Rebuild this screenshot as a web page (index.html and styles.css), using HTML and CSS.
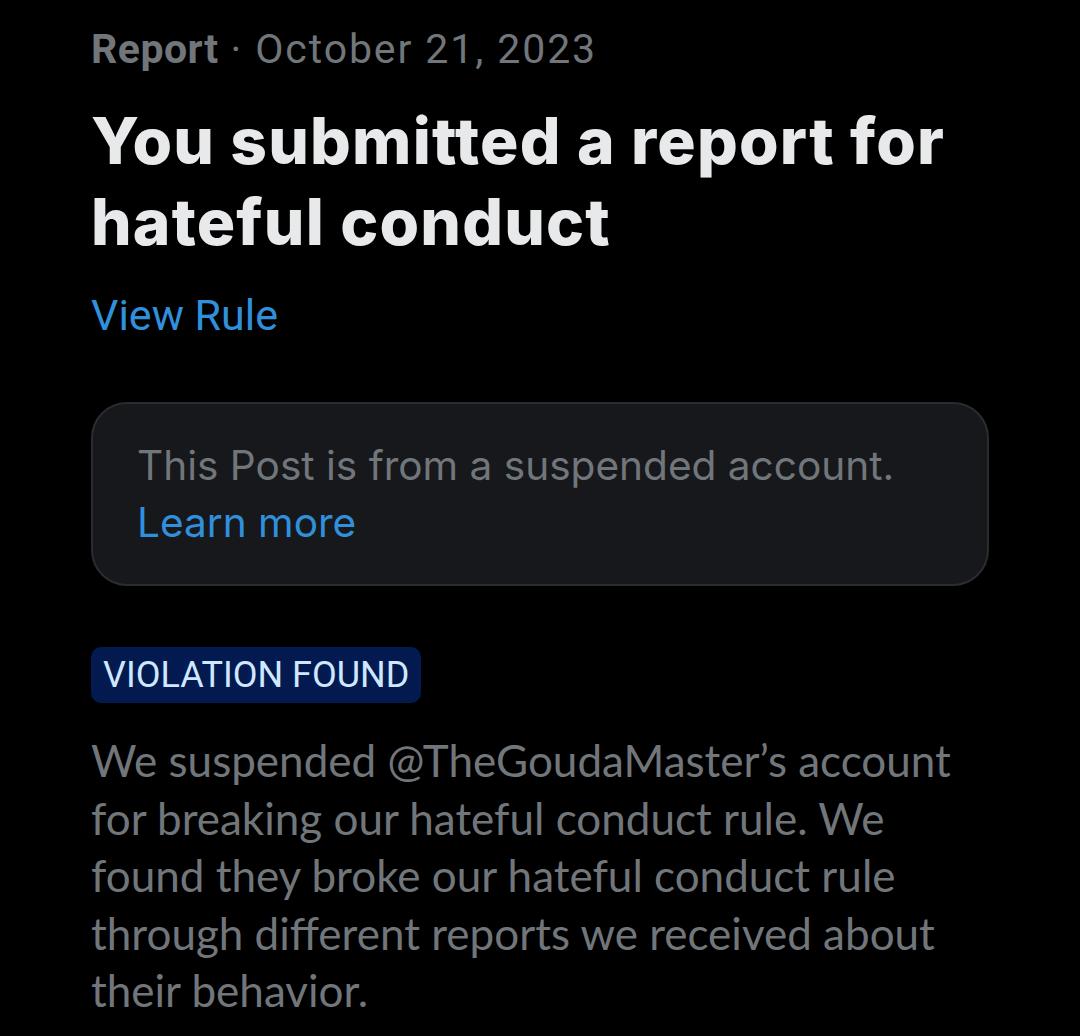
FILE: index.html
```html
<!DOCTYPE html>
<html lang="en">
<head>
<meta charset="utf-8">
<title>Report</title>
<link rel="stylesheet" href="styles.css">
</head>
<body>
<main class="page">
  <div class="meta"><span class="meta-kind">Report</span> · October 21, 2023</div>
  <h1 class="title">You submitted a report for hateful conduct</h1>
  <a class="rule-link" href="#">View Rule</a>
  <div class="card">
    <p class="card-text">This Post is from a suspended account.</p>
    <a class="card-link" href="#">Learn more</a>
  </div>
  <div class="badge">VIOLATION FOUND</div>
  <p class="body-text">We suspended @TheGoudaMaster’s account for breaking our hateful conduct rule. We found they broke our hateful conduct rule through different reports we received about their behavior.</p>
</main>
</body>
</html>
```
FILE: styles.css
```css
html, body {
  margin: 0;
  padding: 0;
  background: #000;
}
.page {
  display: flex;
  flex-direction: column;
  align-items: flex-start;
  padding: 24px 91px 0 91px;
  width: 898px;
}
.meta {
  font-family: Roboto, "Liberation Sans", sans-serif;
  font-size: 41px;
  letter-spacing: 1.9px;
  line-height: 50px;
  color: #71767b;
}
.meta-kind {
  font-weight: 700;
  letter-spacing: 0.5px;
}
.title {
  margin: 26px 0 0 0;
  font-family: Inter, "Liberation Sans", sans-serif;
  font-weight: 800;
  font-size: 64px;
  line-height: 81px;
  letter-spacing: 1.2px;
  color: #e7e9ea;
}
.rule-link {
  margin-top: 28px;
  font-family: Roboto, "Liberation Sans", sans-serif;
  font-size: 43px;
  line-height: 50px;
  color: #3090dc;
  text-decoration: none;
}
.card {
  margin-top: 62px;
  box-sizing: border-box;
  width: 898px;
  height: 184px;
  padding: 33px 44px 0 44px;
  background: #17181c;
  border: 2px solid #2a2c30;
  border-radius: 36px;
}
.card-text {
  margin: 0;
  font-family: Inter, Roboto, sans-serif;
  font-size: 40.6px;
  line-height: 57px;
  color: #71767b;
}
.card-link {
  display: block;
  font-family: Inter, Roboto, sans-serif;
  font-size: 40.6px;
  line-height: 57px;
  color: #3090dc;
  text-decoration: none;
}
.badge {
  margin-top: 61px;
  box-sizing: border-box;
  height: 56px;
  padding: 0 12px;
  display: flex;
  align-items: center;
  background: #021a4f;
  border-radius: 10px;
  font-family: Roboto, "Liberation Sans", sans-serif;
  font-size: 36px;
  color: #cfe7ff;
}
.body-text {
  margin: 29px 0 0 0;
  font-family: Lato, "Liberation Sans", sans-serif;
  font-size: 44px;
  line-height: 57.5px;
  color: #71767b;
}
```
